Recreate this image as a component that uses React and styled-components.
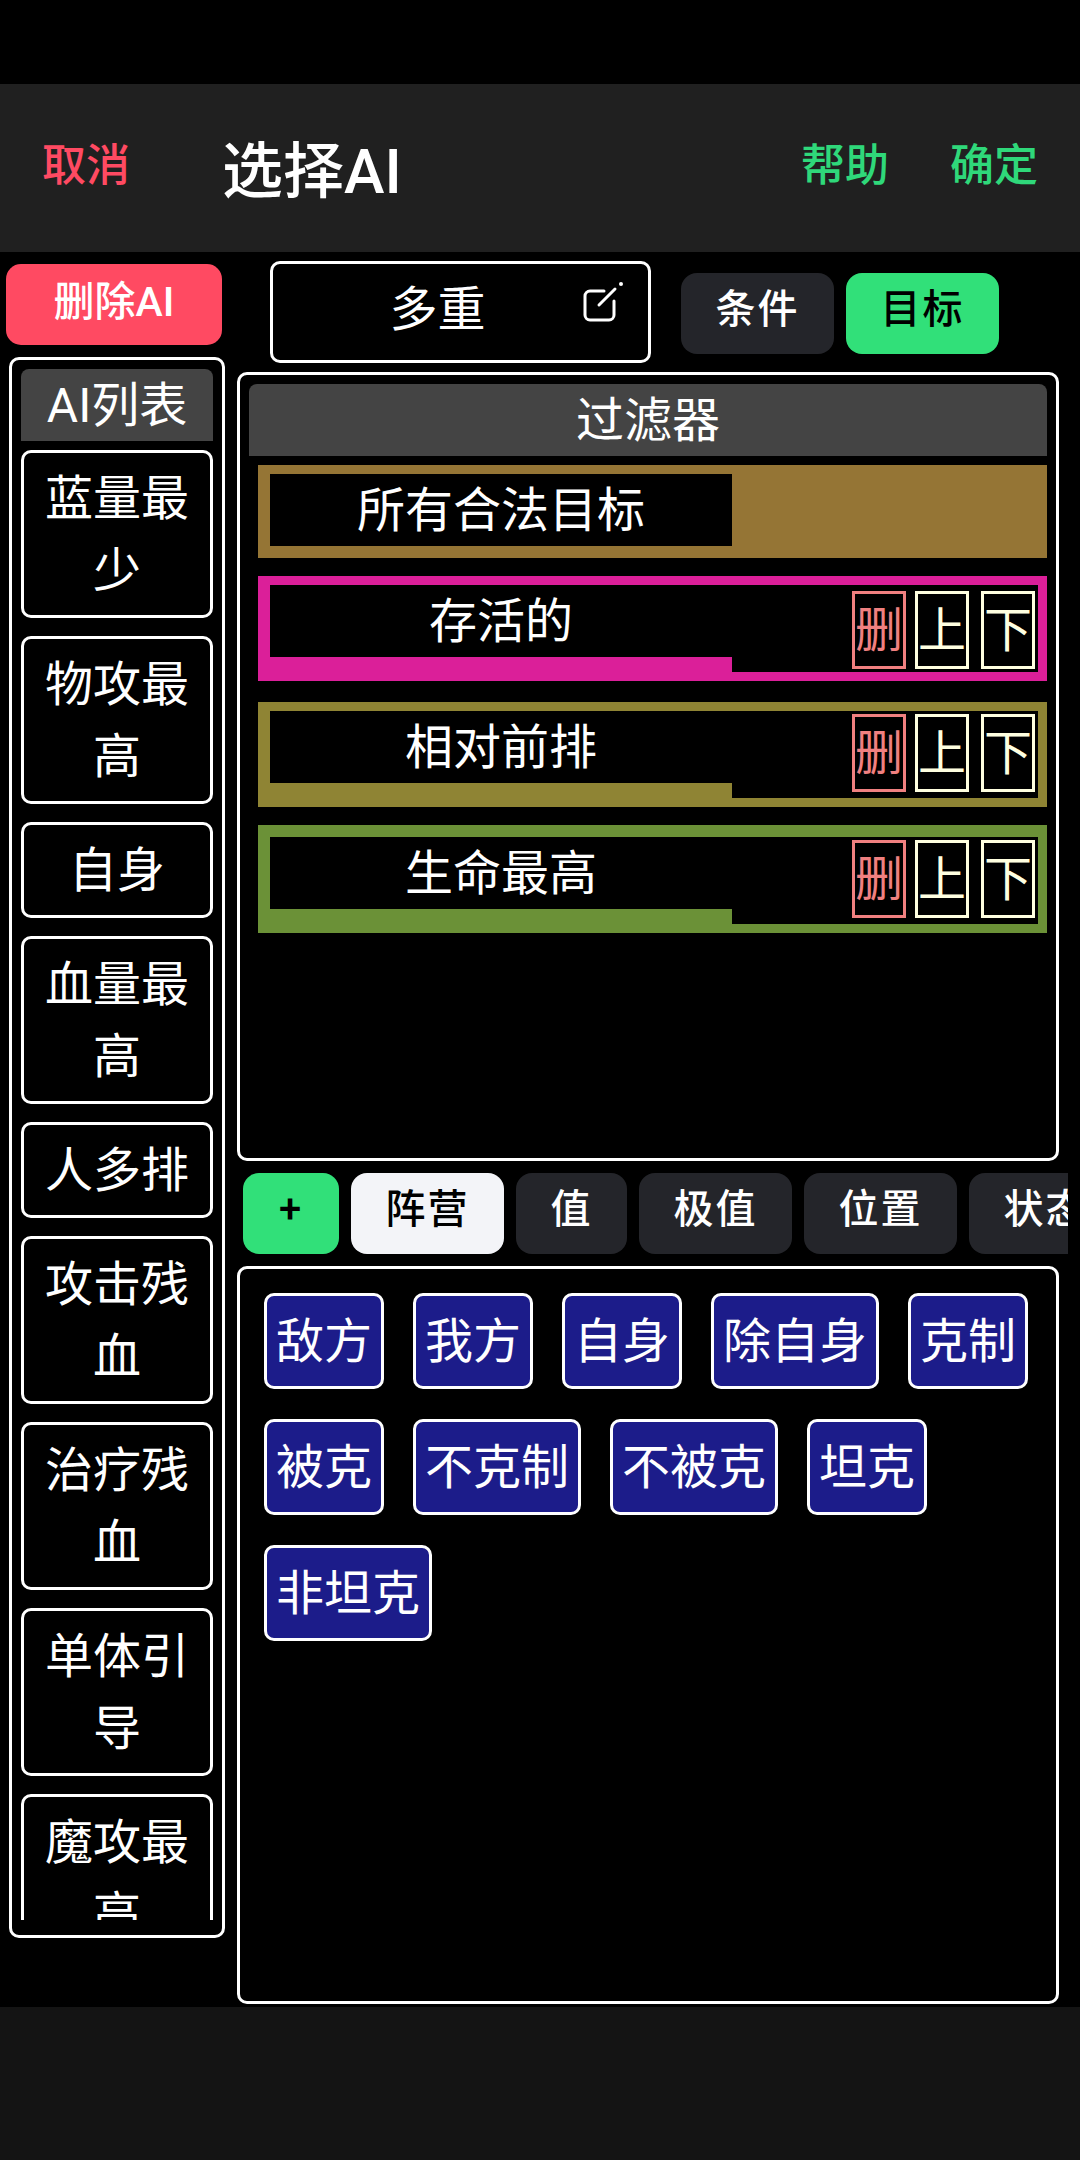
import React from "react";
import styled, { createGlobalStyle } from "styled-components";

const Global = createGlobalStyle`
  html, body { margin: 0; padding: 0; background: #000; }
  * { box-sizing: border-box; }
  body { font-family: Roboto, "Noto Sans CJK SC", sans-serif; color: #fff; }
`;

const Page = styled.div`
  width: 1080px;
  height: 2160px;
  display: flex;
  flex-direction: column;
  background: #000;
  overflow: hidden;
`;
const StatusGap = styled.div`
  height: 84px;
  flex: none;
`;
const Header = styled.header`
  height: 168px;
  flex: none;
  background: #202020;
  display: flex;
  align-items: center;
  padding: 0 44px 0 42px;
`;
const HeadAction = styled.span`
  font-size: 44px;
  line-height: 56px;
  font-weight: 500;
  width: 86px;
  text-align: center;
  color: ${(p) => p.$color};
  white-space: nowrap;
  margin-bottom: 5px;
  margin-left: ${(p) => p.$ml || 0}px;
`;
const Title = styled.h1`
  margin: 7px 0 0 94px;
  font-size: 61px;
  line-height: 72px;
  font-weight: 500;
  white-space: nowrap;
  flex: 1;
`;
const Main = styled.main`
  flex: 1;
  display: flex;
  min-height: 0;
`;
const LeftCol = styled.aside`
  width: 237px;
  flex: none;
  padding: 12px 0 0 6px;
`;
const DeleteAi = styled.button`
  display: block;
  width: 216px;
  height: 81px;
  border: 0;
  padding: 0 0 6px;
  border-radius: 15px;
  background: #ff4a62;
  color: #fff;
  font: 500 41px/70px Roboto, "Noto Sans CJK SC", sans-serif;
`;
const ListPanel = styled.section`
  width: 216px;
  height: 1581px;
  margin: 12px 0 0 3px;
  border: 3px solid #fff;
  border-radius: 10px;
  padding: 9px;
`;
const PanelTitle = styled.div`
  height: 72px;
  background: #444;
  border-radius: 8px 8px 0 0;
  font-size: 48px;
  line-height: 74px;
  text-align: center;
  white-space: nowrap;
`;
const ListScroll = styled.div`
  height: 1470px;
  margin-top: 9px;
  overflow: hidden;
  display: flex;
  flex-direction: column;
  gap: 18px;
`;
const ListItem = styled.div`
  flex: none;
  border: 3px solid #fff;
  border-radius: 10px;
  padding: 10px 12px 8px;
  font-size: 48px;
  line-height: 72px;
  text-align: center;
`;
const RightCol = styled.div`
  flex: 1;
  min-width: 0;
`;
const TopRow = styled.div`
  height: 102px;
  margin: 9px 0 9px 33px;
  display: flex;
  align-items: flex-start;
`;
const NameBox = styled.div`
  width: 381px;
  height: 102px;
  border: 3px solid #fff;
  border-radius: 10px;
  position: relative;
  font-size: 48px;
  line-height: 92px;
  padding-right: 46px;
  text-align: center;
  margin-right: 30px;
`;
const EditIcon = styled.svg`
  position: absolute;
  right: 24px;
  top: 17px;
  width: 44px;
  height: 44px;
`;
const Pill = styled.button`
  flex: none;
  height: 81px;
  border: 0;
  border-radius: 16px;
  padding: 0 0 7px;
  width: ${(p) => p.$w || 153}px;
  margin-top: ${(p) => p.$mt || 0}px;
  margin-left: ${(p) => p.$ml || 0}px;
  background: ${(p) => p.$bg};
  color: ${(p) => p.$fg};
  font: 500 40px/70px Roboto, "Noto Sans CJK SC", sans-serif;
  letter-spacing: 2px;
  white-space: nowrap;
  overflow: hidden;
`;
const FilterPanel = styled.section`
  width: 822px;
  height: 789px;
  border: 3px solid #fff;
  border-radius: 10px;
  padding: 9px;
`;
const Row = styled.div`
  margin: ${(p) => p.$mt}px 0 0 9px;
  background: ${(p) => p.$color};
  padding: ${(p) => p.$pt}px 9px ${(p) => p.$pb}px 12px;
  display: flex;
  align-items: flex-start;
`;
const RowLabel = styled.div`
  width: 462px;
  flex: none;
  height: 72px;
  background: #000;
  font-size: 48px;
  line-height: 74px;
  text-align: center;
`;
const RowControls = styled.div`
  flex: 1;
  height: 87px;
  background: #000;
  display: flex;
  justify-content: flex-end;
  gap: 9px;
  padding: ${(p) => p.$pt}px 3px 0 0;
`;
const SquareBtn = styled.div`
  width: 54px;
  height: 78px;
  margin-left: ${(p) => p.$ml || 0}px;
  border: 3px solid ${(p) => p.$color};
  color: ${(p) => p.$color};
  font-size: 48px;
  line-height: 74px;
  text-align: center;
  overflow: hidden;
`;
const TabStrip = styled.nav`
  width: 825px;
  margin: 12px 0 12px 6px;
  display: flex;
  gap: 12px;
  overflow: hidden;
`;
const OptionPanel = styled.section`
  width: 822px;
  height: 738px;
  border: 3px solid #fff;
  border-radius: 10px;
  padding: 24px;
  display: flex;
  flex-wrap: wrap;
  align-content: flex-start;
  gap: 30px 29px;
`;
const Option = styled.div`
  height: 96px;
  border: 3px solid #fff;
  border-radius: 10px;
  background: #1c1c8a;
  padding: 0 9px;
  font-size: 48px;
  line-height: 92px;
  white-space: nowrap;
`;
const Footer = styled.footer`
  height: 153px;
  flex: none;
  background: #141414;
`;

const items = ["蓝量最少", "物攻最高", "自身", "血量最高", "人多排", "攻击残血", "治疗残血", "单体引导", "魔攻最高"];
const rows = [
  { label: "存活的", color: "#db1f99", mt: 18, pt: 9, pb: 9, cp: 6 },
  { label: "相对前排", color: "#8f8434", mt: 21, pt: 9, pb: 9, cp: 3 },
  { label: "生命最高", color: "#6b9137", mt: 18, pt: 12, pb: 9, cp: 3 },
];
const tabs = [
  { t: "阵营", bg: "#f3f4f8", fg: "#000", w: 153 },
  { t: "值", bg: "#24252a", fg: "#fff", w: 111 },
  { t: "极值", bg: "#24252a", fg: "#fff", w: 153 },
  { t: "位置", bg: "#24252a", fg: "#fff", w: 153 },
  { t: "状态", bg: "#24252a", fg: "#fff", w: 153 },
];
const options = ["敌方", "我方", "自身", "除自身", "克制", "被克", "不克制", "不被克", "坦克", "非坦克"];

export default function App() {
  return (
    <Page>
      <Global />
      <StatusGap />
      <Header>
        <HeadAction $color="#ff4a62">取消</HeadAction>
        <Title>选择AI</Title>
        <HeadAction $color="#2fd87a">帮助</HeadAction>
        <HeadAction $color="#2fd87a" $ml={63}>确定</HeadAction>
      </Header>
      <Main>
        <LeftCol>
          <DeleteAi>删除AI</DeleteAi>
          <ListPanel>
            <PanelTitle>AI列表</PanelTitle>
            <ListScroll>
              {items.map((t) => (
                <ListItem key={t}>{t}</ListItem>
              ))}
            </ListScroll>
          </ListPanel>
        </LeftCol>
        <RightCol>
          <TopRow>
            <NameBox>
              多重
              <EditIcon viewBox="0 0 44 44" fill="none" stroke="#fff" strokeWidth="3" strokeLinecap="round">
                <path d="M24 10H10a5 5 0 0 0-5 5v19a5 5 0 0 0 5 5h19a5 5 0 0 0 5-5V20" />
                <path d="M19 24 35 8" />
                <circle cx="41" cy="3" r="2" fill="#fff" stroke="none" />
              </EditIcon>
            </NameBox>
            <Pill $bg="#24252a" $fg="#fff" $mt={12}>条件</Pill>
            <Pill $bg="#31e079" $fg="#000" $mt={12} $ml={12}>目标</Pill>
          </TopRow>
          <FilterPanel>
            <PanelTitle>过滤器</PanelTitle>
            <Row $color="#957535" $mt={9} $pt={9} $pb={12}>
              <RowLabel>所有合法目标</RowLabel>
            </Row>
            {rows.map((r) => (
              <Row key={r.label} $color={r.color} $mt={r.mt} $pt={r.pt} $pb={r.pb}>
                <RowLabel>{r.label}</RowLabel>
                <RowControls $pt={r.cp}>
                  <SquareBtn $color="#f08080">删</SquareBtn>
                  <SquareBtn $color="#ffffe0">上</SquareBtn>
                  <SquareBtn $color="#ffffe0" $ml={3}>下</SquareBtn>
                </RowControls>
              </Row>
            ))}
          </FilterPanel>
          <TabStrip>
            <Pill $bg="#31e079" $fg="#000" $w={96}>+</Pill>
            {tabs.map((t) => (
              <Pill key={t.t} $bg={t.bg} $fg={t.fg} $w={t.w}>{t.t}</Pill>
            ))}
          </TabStrip>
          <OptionPanel>
            {options.map((t) => (
              <Option key={t}>{t}</Option>
            ))}
          </OptionPanel>
        </RightCol>
      </Main>
      <Footer />
    </Page>
  );
}
